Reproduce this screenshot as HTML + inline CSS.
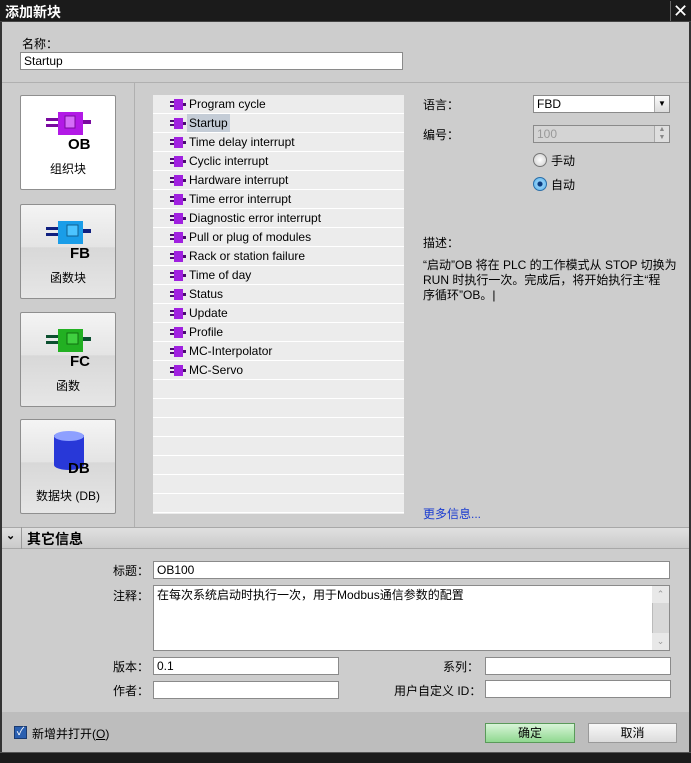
<!DOCTYPE html>
<html><head><meta charset="utf-8"><style>
*{box-sizing:border-box;margin:0;padding:0}
body{width:691px;height:763px;background:#cdcdcd;font-family:"Liberation Sans","Noto Sans CJK SC",sans-serif;font-size:12px;color:#000;position:relative;overflow:hidden}
.a{position:absolute}
.inp{position:absolute;background:#fff;border:1px solid #8a8a8a;padding:1px 3px;font-size:12px;line-height:14px}
.btn{position:absolute;left:20px;width:96px;height:95px;border:1px solid #8f8f8f;border-radius:2px;background:linear-gradient(#f4f4f4,#e4e4e4 45%,#d8d8d8 46%,#e6e6e6);text-align:center;font-size:12px}
.btn .l{position:absolute;left:0;right:0;top:64px}
.btn svg{position:absolute;left:25px;top:15px}
.row{position:absolute;left:153px;width:251px;height:19px;border-bottom:1px solid #fff;background:#ececec;font-size:12px;line-height:18px}
.row span{position:absolute;left:36px}
.row svg{position:absolute;left:17px;top:4px}
.lbl{position:absolute;font-size:12px}
</style></head><body>
<div class="a" style="left:0;top:0;width:691px;height:22px;background:#1b1b1b;border-bottom:1px solid #444"></div>
<div class="a" style="left:5px;top:2px;color:#fff;font-size:14px;font-weight:bold">添加新块</div>
<div class="a" style="left:670px;top:1px;width:20px;height:20px;border-left:1px solid #666;color:#fff;font-size:18px;text-align:center;line-height:20px">✕</div>
<div class="a" style="left:0;top:22px;width:2px;height:741px;background:#333"></div>
<div class="a" style="left:689px;top:22px;width:2px;height:741px;background:#333"></div>

<div class="lbl" style="left:22px;top:35px">名称：</div>
<div class="inp" style="left:20px;top:52px;width:383px;height:18px">Startup</div>
<div class="a" style="left:2px;top:82px;width:687px;height:1px;background:#b0b0b0"></div>
<div class="a" style="left:134px;top:83px;width:1px;height:444px;background:#b0b0b0"></div>

<div class="btn" style="top:95px;background:#fff"><svg width="60" height="42"><rect x="0" y="7" width="13" height="3" fill="#7a0aa0"/><rect x="0" y="13" width="13" height="3" fill="#7a0aa0"/><rect x="36" y="9" width="9" height="4" fill="#7a0aa0"/><rect x="12" y="1" width="25" height="23" fill="#b219e6"/><rect x="19" y="5" width="10" height="12" fill="#d56cf8" stroke="#7a0aa0"/><text x="22" y="38" font-family="Liberation Sans" font-weight="bold" font-size="15">OB</text></svg><div class="l">组织块</div></div>
<div class="btn" style="top:204px"><svg width="60" height="42"><rect x="0" y="7" width="13" height="3" fill="#102080"/><rect x="0" y="13" width="13" height="3" fill="#102080"/><rect x="36" y="9" width="9" height="4" fill="#102080"/><rect x="12" y="1" width="25" height="23" fill="#1a9de8"/><rect x="21" y="5" width="11" height="11" fill="#4cc4ff" stroke="#106090"/><text x="24" y="38" font-family="Liberation Sans" font-weight="bold" font-size="15">FB</text></svg><div class="l">函数块</div></div>
<div class="btn" style="top:312px"><svg width="60" height="42"><rect x="0" y="7" width="13" height="3" fill="#0c5030"/><rect x="0" y="13" width="13" height="3" fill="#0c5030"/><rect x="36" y="9" width="9" height="4" fill="#0c5030"/><rect x="12" y="1" width="25" height="23" fill="#22b022"/><rect x="21" y="5" width="11" height="11" fill="#40d040" stroke="#107010"/><text x="24" y="38" font-family="Liberation Sans" font-weight="bold" font-size="15">FC</text></svg><div class="l">函数</div></div>
<div class="btn" style="top:419px"><svg width="60" height="44" style="left:20px;top:10px"><rect x="13" y="5" width="30" height="30" fill="#2838d8"/><ellipse cx="28" cy="35" rx="15" ry="5" fill="#2838d8"/><ellipse cx="28" cy="6" rx="15" ry="5" fill="#8ea0ff"/><text x="27" y="43" font-family="Liberation Sans" font-weight="bold" font-size="15">DB</text></svg><div class="l" style="top:67px">数据块 (DB)</div></div>

<div class="a" style="left:153px;top:95px;width:251px;height:419px;background:#ececec"></div>
<div id="list"></div>
<script>
var n=["Program cycle","Startup","Time delay interrupt","Cyclic interrupt","Hardware interrupt","Time error interrupt","Diagnostic error interrupt","Pull or plug of modules","Rack or station failure","Time of day","Status","Update","Profile","MC-Interpolator","MC-Servo"];
var h="";for(var i=0;i<22;i++){var t=n[i]||"";var ic=t?'<svg width="16" height="11"><rect x="0" y="2" width="5" height="2" fill="#4a0a70"/><rect x="0" y="6" width="5" height="2" fill="#4a0a70"/><rect x="12" y="4" width="4" height="3" fill="#4a0a70"/><rect x="4" y="0" width="9" height="11" fill="#a020e0"/></svg>':'';
var s=t?'<span'+(i==1?' style="background:#c4ccd6;padding:0 2px;left:34px"':'')+'>'+t+'</span>':'';
if(95+i*19<514)h+='<div class="row" style="top:'+(95+i*19)+'px">'+ic+s+'</div>';}
document.getElementById('list').innerHTML=h;
</script>

<div class="lbl" style="left:423px;top:96px">语言：</div>
<div class="inp" style="left:533px;top:95px;width:137px;height:18px">FBD</div>
<div class="a" style="left:654px;top:96px;width:15px;height:16px;background:linear-gradient(#fafafa,#dcdcdc);border-left:1px solid #aaa;font-size:8px;text-align:center;line-height:16px">▼</div>
<div class="lbl" style="left:423px;top:126px">编号：</div>
<div class="inp" style="left:533px;top:125px;width:137px;height:18px;background:#d4d4d4;color:#999">100</div>
<div class="a" style="left:654px;top:126px;width:15px;height:16px;background:#dedede;border-left:1px solid #aaa;font-size:7px;color:#888;text-align:center;line-height:8px">▲<br>▼</div>
<div class="a" style="left:533px;top:153px;width:14px;height:14px;border-radius:50%;border:1px solid #777;background:radial-gradient(#fff,#ccc)"></div>
<div class="lbl" style="left:551px;top:152px">手动</div>
<div class="a" style="left:533px;top:177px;width:14px;height:14px;border-radius:50%;border:1px solid #2a6ea8;background:radial-gradient(#0a3c80 25%,#8fd0f8 35%,#5ab0e8)"></div>
<div class="lbl" style="left:551px;top:176px">自动</div>
<div class="lbl" style="left:423px;top:234px">描述：</div>
<div class="lbl" style="left:423px;top:258px;width:262px;line-height:15px;white-space:nowrap">“启动”OB 将在 PLC 的工作模式从 STOP 切换为<br>RUN 时执行一次。完成后，将开始执行主“程<br>序循环”OB。|</div>
<div class="lbl" style="left:423px;top:505px;color:#1a3cd0">更多信息...</div>

<div class="a" style="left:2px;top:527px;width:687px;height:22px;background:linear-gradient(#e0e0e0,#cacaca);border-top:1px solid #a8a8a8;border-bottom:1px solid #a8a8a8"></div>
<div class="a" style="left:21px;top:527px;width:1px;height:22px;background:#999"></div>
<div class="a" style="left:6px;top:529px;font-size:11px;font-weight:bold">⌄</div>
<div class="a" style="left:27px;top:529px;font-size:14px;font-weight:bold">其它信息</div>

<div class="lbl" style="left:113px;top:562px">标题：</div>
<div class="inp" style="left:153px;top:561px;width:517px;height:18px">OB100</div>
<div class="lbl" style="left:113px;top:587px">注释：</div>
<div class="inp" style="left:153px;top:585px;width:517px;height:66px;padding-top:2px">在每次系统启动时执行一次，用于Modbus通信参数的配置</div>
<div class="a" style="left:652px;top:586px;width:17px;height:64px;background:#d8d8d8;border-left:1px solid #bbb"></div>
<div class="a" style="left:652px;top:586px;width:17px;height:17px;background:#e8e8e8;font-size:9px;color:#999;text-align:center;line-height:17px">⌃</div>
<div class="a" style="left:652px;top:633px;width:17px;height:17px;background:#e8e8e8;font-size:9px;color:#999;text-align:center;line-height:17px">⌄</div>
<div class="lbl" style="left:113px;top:658px">版本：</div>
<div class="inp" style="left:153px;top:657px;width:186px;height:18px">0.1</div>
<div class="lbl" style="left:443px;top:658px">系列：</div>
<div class="inp" style="left:485px;top:657px;width:186px;height:18px"></div>
<div class="lbl" style="left:113px;top:682px">作者：</div>
<div class="inp" style="left:153px;top:681px;width:186px;height:18px"></div>
<div class="lbl" style="left:394px;top:682px">用户自定义 ID：</div>
<div class="inp" style="left:485px;top:680px;width:186px;height:18px"></div>

<div class="a" style="left:2px;top:712px;width:687px;height:40px;background:#bdbdbd"></div>
<div class="a" style="left:14px;top:726px;width:13px;height:13px;background:#2a5fb0;border:1px solid #1a3a70;color:#fff;font-size:11px;line-height:11px;text-align:center">✓</div>
<div class="lbl" style="left:32px;top:725px">新增并打开(<u>O</u>)</div>
<div class="a" style="left:485px;top:723px;width:90px;height:20px;border:1px solid #5a9a5a;background:linear-gradient(#d8f5d8,#90d890);text-align:center;line-height:18px">确定</div>
<div class="a" style="left:588px;top:723px;width:89px;height:20px;border:1px solid #999;background:linear-gradient(#f8f8f8,#dcdcdc);text-align:center;line-height:18px">取消</div>
<div class="a" style="left:0;top:752px;width:691px;height:11px;background:#1b1b1b;border-top:1px solid #555"></div>
</body></html>
